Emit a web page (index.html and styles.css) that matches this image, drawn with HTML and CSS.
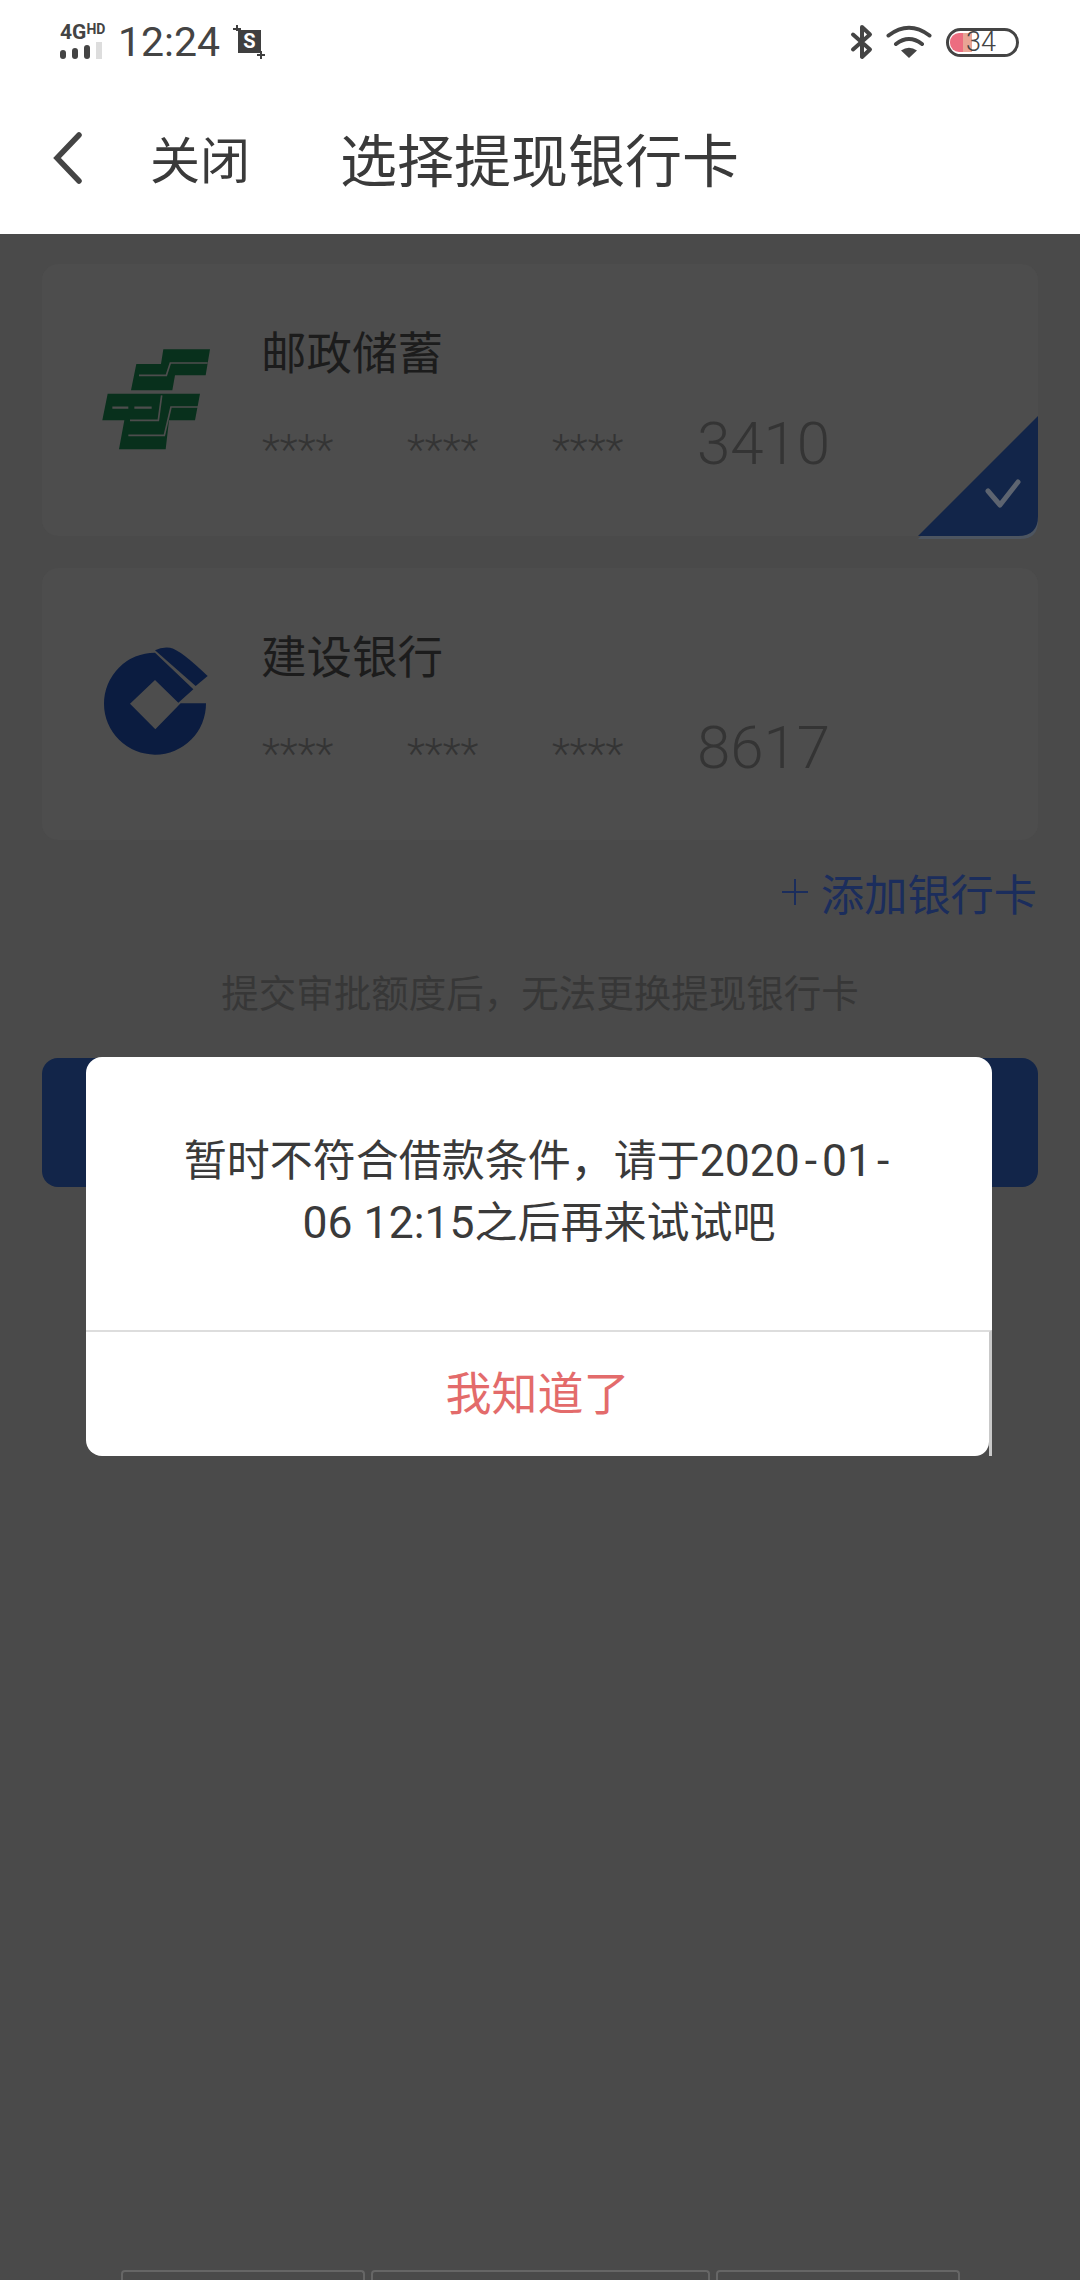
FILE: index.html
```html
<!DOCTYPE html>
<html lang="zh-CN">
<head>
  <meta charset="UTF-8">
  <meta name="viewport" content="width=device-width, initial-scale=1.0">
  <title>选择提现银行卡</title>
  <link rel="stylesheet" href="styles.css">
</head>
<body>
  <div class="status-bar">
    <div class="status-left">
      <div class="signal">
        <div class="signal-type">4G<span class="signal-hd">HD</span></div>
        <div class="signal-bars">
          <span class="bar"></span>
          <span class="bar bar-2"></span>
          <span class="bar bar-3"></span>
          <span class="bar bar-4"></span>
        </div>
      </div>
      <span class="clock">12:24</span>
      <svg class="shot-icon" width="34" height="34" viewBox="0 0 34 34">
        <rect x="6" y="5" width="23" height="23" fill="#3f3f3f"/>
        <path d="M1 4h8M5 0v6M25 30h8M29 26v8" stroke="#3f3f3f" stroke-width="2" fill="none"/>
        <text x="17.500" y="23" class="shot-letter">S</text>
      </svg>
    </div>
    <div class="status-right">
      <svg class="bt-icon" width="24" height="36" viewBox="0 0 24 36">
        <path d="M3 10.500L20 25.500L12 33V3L20 10.500L3 25.500" fill="none" stroke="#444" stroke-width="4" stroke-linecap="round" stroke-linejoin="round"/>
      </svg>
      <svg class="wifi-icon" width="46" height="34" viewBox="0 0 46 34">
        <path d="M2.500 10.500Q23 -5 43.500 10.500M10 19Q23 9 36 19" fill="none" stroke="#444" stroke-width="4" stroke-linecap="round"/>
        <path d="M15 25.500Q23 20 31 25.500L23 33Z" fill="#444"/>
      </svg>
      <div class="battery">
        <span class="battery-fill"></span>
        <span class="battery-edge"></span>
        <span class="battery-num">34</span>
      </div>
    </div>
  </div>

  <div class="nav-bar">
    <svg class="back-icon" width="32" height="52" viewBox="0 0 32 52">
      <path d="M27 3L5 26L27 49" fill="none" stroke="#444" stroke-width="5.500" stroke-linecap="round"/>
    </svg>
    <span class="nav-close">关闭</span>
    <span class="nav-title">选择提现银行卡</span>
  </div>

  <div class="content">
    <div class="card">
      <div class="card-logo">
        <svg width="120" height="110" viewBox="0 0 360 330">
          <path d="M205 22H345L332 100H240L232 145H108L124 66H198Z" fill="#08301c"/>
          <path d="M38 155H315L300 235H222L212 322H72L88 235H22Z" fill="#08301c"/>
          <path d="M338 63H226L214 100H132M200 160L190 235H105M318 195H228L208 280H100" fill="none" stroke="#4d4d4d" stroke-width="5"/>
          <path d="M52 197H100M118 197H170" fill="none" stroke="#4d4d4d" stroke-width="7"/>
        </svg>
      </div>
      <div class="card-info">
        <div class="bank-name">邮政储蓄</div>
        <div class="card-number">
          <span class="stars">****</span>
          <span class="stars">****</span>
          <span class="stars">****</span>
          <span class="digits">3410</span>
        </div>
      </div>
      <svg class="card-check" width="120" height="123" viewBox="0 0 120 123">
        <path d="M120 3L0 123H102Q120 123 120 105Z" fill="#4d5560"/>
        <path d="M120 0L0 120H100Q120 120 120 100Z" fill="#122549"/>
        <path d="M70 75L82 89L100 66" fill="none" stroke="#5d6470" stroke-width="5" stroke-linecap="round" stroke-linejoin="round"/>
      </svg>
    </div>

    <div class="card">
      <div class="card-logo">
        <svg width="120" height="110" viewBox="195 260 360 330">
          <path d="M528 432A153 153 0 1 1 375 280L490 390L445 430L375 362L300 433L376 510L452 432Z" fill="#0b1c40"/>
          <path d="M375 273Q395 262 420 265Q450 270 533 350L497 380Z" fill="#0b1c40"/>
        </svg>
      </div>
      <div class="card-info">
        <div class="bank-name">建设银行</div>
        <div class="card-number">
          <span class="stars">****</span>
          <span class="stars">****</span>
          <span class="stars">****</span>
          <span class="digits">8617</span>
        </div>
      </div>
    </div>

    <div class="add-card"><span class="add-plus"></span>添加银行卡</div>
    <div class="notice">提交审批额度后，无法更换提现银行卡</div>
    <div class="submit"></div>

    <div class="tabs">
      <span class="tab tab-a"></span>
      <span class="tab tab-b"></span>
      <span class="tab tab-c"></span>
    </div>
  </div>

  <div class="dialog">
    <div class="dialog-body">
      <p class="dialog-text">暂时不符合借款条件，请于<span class="date">2020<span class="dash">-</span>01<span class="dash">-</span>06 12:15</span>之后再来试试吧</p>
    </div>
    <div class="dialog-footer">
      <div class="dialog-btn">我知道了</div>
    </div>
  </div>
</body>
</html>
```

FILE: styles.css
```css
* {
  box-sizing: border-box;
}

body {
  font-family: Roboto, "Noto Sans CJK SC", sans-serif;
  margin: 0;
  padding: 0;
  width: 1080px;
  height: 2280px;
  overflow: hidden;
  position: relative;
  display: flex;
  flex-direction: column;
  background-color: #4a4a4a;
}

.status-bar {
  height: 90px;
  background-color: #fff;
  display: flex;
  justify-content: space-between;
  padding: 0 61px 6px 60px;
}

.status-left,
.status-right {
  display: flex;
  align-items: center;
}

.signal {
  width: 46px;
  margin-bottom: 4px;
  color: #444;
}

.signal-type {
  font-size: 21px;
  font-weight: 700;
  line-height: 15px;
  white-space: nowrap;
}

.signal-hd {
  font-size: 14px;
  vertical-align: 5px;
}

.signal-bars {
  display: flex;
  align-items: flex-end;
  gap: 6px;
  height: 17px;
  margin-top: 2px;
}

.bar {
  width: 6px;
  height: 9px;
  border-radius: 3px;
  background-color: #444;
}

.bar-2 {
  height: 11px;
}

.bar-3 {
  height: 14px;
}

.bar-4 {
  height: 17px;
  border-radius: 0;
  background-color: #ddd;
}

.clock {
  margin-left: 12px;
  font-size: 41px;
  color: #444;
}

.shot-icon {
  margin-left: 12px;
}

.shot-letter {
  font-size: 20px;
  font-weight: 700;
  fill: #fff;
  text-anchor: middle;
}

.wifi-icon {
  margin-left: 12px;
}

.battery {
  margin-left: 14px;
  width: 73px;
  height: 29px;
  border: 3px solid #444;
  border-radius: 15px;
  display: flex;
  align-items: center;
  padding-left: 1px;
  overflow: hidden;
}

.battery-fill {
  width: 13px;
  height: 19px;
  border-radius: 9px 0 0 9px;
  background-color: #ec6d80;
}

.battery-edge {
  width: 9px;
  height: 19px;
  background-color: #e8a595;
}

.battery-num {
  margin-left: -6px;
  font-size: 27px;
  font-weight: 300;
  color: #444;
}

.nav-bar {
  height: 144px;
  background-color: #fff;
  display: flex;
  align-items: center;
  padding-left: 52px;
  padding-bottom: 11px;
  color: #3a3a3a;
}

.back-icon {
  margin-top: 3px;
}

.nav-close {
  margin-left: 66px;
  font-size: 50px;
}

.nav-title {
  margin-left: 90px;
  font-size: 57px;
}

.content {
  flex: 1;
  display: flex;
  flex-direction: column;
  padding: 30px 42px 0;
}

.card {
  height: 272px;
  margin-bottom: 32px;
  padding-left: 53px;
  border-radius: 16px;
  background-color: #4d4d4d;
  display: flex;
  align-items: center;
  position: relative;
}

.card-logo {
  width: 167px;
  display: flex;
  margin-top: -7px;
}

.card-info {
  flex: 1;
  padding-top: 3px;
}

.bank-name {
  height: 60px;
  margin-left: -1px;
  font-size: 45.500px;
  line-height: 60px;
  color: #1c1c1c;
}

.card-number {
  display: grid;
  grid-template-columns: 145px 145px 145px auto;
  align-items: center;
  height: 70px;
  margin-top: 23px;
}

.stars {
  font-size: 42px;
  font-weight: 300;
  color: #343434;
  padding-top: 12px;
}

.digits {
  font-size: 60px;
  font-weight: 300;
  color: #343434;
}

.card-check {
  position: absolute;
  right: 0;
  bottom: -3px;
}

.add-card {
  height: 60px;
  margin-top: -10px;
  padding-right: 1px;
  display: flex;
  align-items: center;
  justify-content: flex-end;
  font-size: 43.200px;
  color: #1b2d5c;
}

.add-plus {
  width: 26px;
  height: 26px;
  margin-right: 13px;
  background:
    linear-gradient(#1b2d5c, #1b2d5c) center / 26px 2px no-repeat,
    linear-gradient(#1b2d5c, #1b2d5c) center / 2px 26px no-repeat;
}

.notice {
  height: 58px;
  margin-top: 43px;
  font-size: 37.500px;
  line-height: 58px;
  text-align: center;
  color: #373737;
}

.submit {
  height: 129px;
  margin-top: 35px;
  border-radius: 16px;
  background-color: #122549;
}

.tabs {
  margin-top: auto;
  margin-left: 79px;
  display: flex;
  gap: 6px;
}

.tab {
  height: 10px;
  border: 2px solid #666;
  border-bottom: none;
  border-radius: 4px 4px 0 0;
}

.tab-a {
  width: 244px;
}

.tab-b {
  width: 339px;
}

.tab-c {
  width: 244px;
}

.dialog {
  position: absolute;
  left: 86px;
  top: 1057px;
  width: 906px;
  height: 399px;
  display: flex;
  flex-direction: column;
}

.dialog-body {
  height: 273px;
  padding: 0 88px 3px;
  border-radius: 16px 16px 0 0;
  background-color: #fff;
  display: flex;
  align-items: center;
}

.dialog-text {
  margin: 0;
  width: 100%;
  text-align: center;
  font-size: 43px;
  line-height: 62px;
  color: #3a3a3a;
}

.date {
  font-size: 44.500px;
}

.dash {
  padding: 0 5px;
}

.dialog-footer {
  flex: 1;
  border-top: 2px solid #ddd;
  border-right: 3px solid #c9c9c9;
  border-bottom-left-radius: 16px;
  background-color: #4a4a4a;
}

.dialog-btn {
  height: 100%;
  padding-bottom: 8px;
  border-radius: 0 0 14px 16px;
  background-color: #fff;
  display: flex;
  align-items: center;
  justify-content: center;
  font-size: 46px;
  color: #e36b6b;
}
```
